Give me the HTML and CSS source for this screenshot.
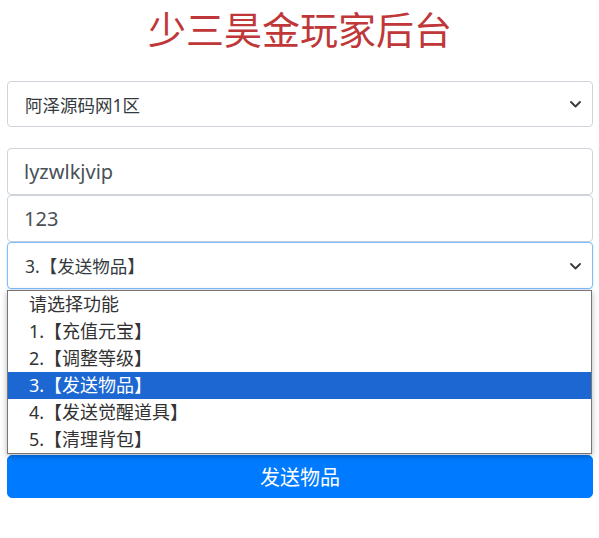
FILE: index.html
```html
<!DOCTYPE html>
<html lang="zh-CN">
<head>
<meta charset="utf-8">
<title>少三昊金玩家后台</title>
<link rel="stylesheet" href="styles.css">
</head>
<body>
<div class="page">
  <h1 class="title">少三昊金玩家后台</h1>
  <div class="control select first">
    <span class="value">阿泽源码网1区</span>
    <svg class="chev" width="11" height="7" viewBox="0 0 11 7"><polyline points="1,1 5.5,5.5 10,1" fill="none" stroke="#343a40" stroke-width="1.8" stroke-linecap="round" stroke-linejoin="round"/></svg>
  </div>
  <div class="control input gap">lyzwlkjvip</div>
  <div class="control input">123</div>
  <div class="select-wrap">
    <div class="control select focused">
      <span class="value">3.【发送物品】</span>
      <svg class="chev" width="11" height="7" viewBox="0 0 11 7"><polyline points="1,1 5.5,5.5 10,1" fill="none" stroke="#343a40" stroke-width="1.8" stroke-linecap="round" stroke-linejoin="round"/></svg>
    </div>
    <ul class="listbox">
      <li>请选择功能</li>
      <li>1.【充值元宝】</li>
      <li>2.【调整等级】</li>
      <li class="selected">3.【发送物品】</li>
      <li>4.【发送觉醒道具】</li>
      <li>5.【清理背包】</li>
    </ul>
  </div>
  <button class="btn">发送物品</button>
</div>
</body>
</html>
```

FILE: styles.css
```css
html, body {
  margin: 0;
  padding: 0;
  background: #fff;
}
body {
  font-family: "Noto Sans", "Noto Sans CJK SC", sans-serif;
  color: #495057;
}
.page {
  padding: 0 6px 0 7px;
  display: flex;
  flex-direction: column;
}
.title {
  margin: 0;
  font-size: 38px;
  line-height: 58px;
  font-weight: 400;
  text-align: center;
  color: #c0373a;
}
.control {
  box-sizing: border-box;
  border: 1px solid #ced4da;
  border-radius: 4px;
  background: #fff;
  font-size: 17.5px;
  display: flex;
  align-items: center;
  padding: 0 16px 0 16px;
  height: 47px;
  color: #495057;
}
.input {
  font-size: 20px;
}
.first {
  margin-top: 23px;
  height: 46px;
  padding-left: 17px;
}
.gap {
  margin-top: 21px;
}
.select {
  justify-content: space-between;
  padding-right: 11px;
}
.select .value {
  color: #343a40;
}
.chev {
  display: block;
  margin-top: 1px;
}
.focused {
  border-color: #80bdff;
  box-shadow: 0 0 0 1px rgba(0, 123, 255, 0.08);
  padding-left: 17px;
}
.select-wrap {
  position: relative;
}
.listbox {
  position: absolute;
  top: 48px;
  left: 0;
  width: 585px;
  box-sizing: border-box;
  margin: 0;
  padding: 0;
  list-style: none;
  background: #fff;
  border: 1px solid #767676;
  box-shadow: 0 2px 6px rgba(0, 0, 0, 0.3);
  z-index: 2;
}
.listbox li {
  height: 27px;
  line-height: 27px;
  padding-left: 21px;
  font-size: 18px;
  color: #333;
}
.listbox li.selected {
  background: #1c67d1;
  color: #fff;
}
.btn {
  margin-top: 166px;
  height: 43px;
  border: 1px solid #007bff;
  border-radius: 5px;
  background: #007bff;
  color: #fff;
  font-family: "Noto Sans", "Noto Sans CJK SC", sans-serif;
  font-size: 20px;
  padding: 0;
}
```
